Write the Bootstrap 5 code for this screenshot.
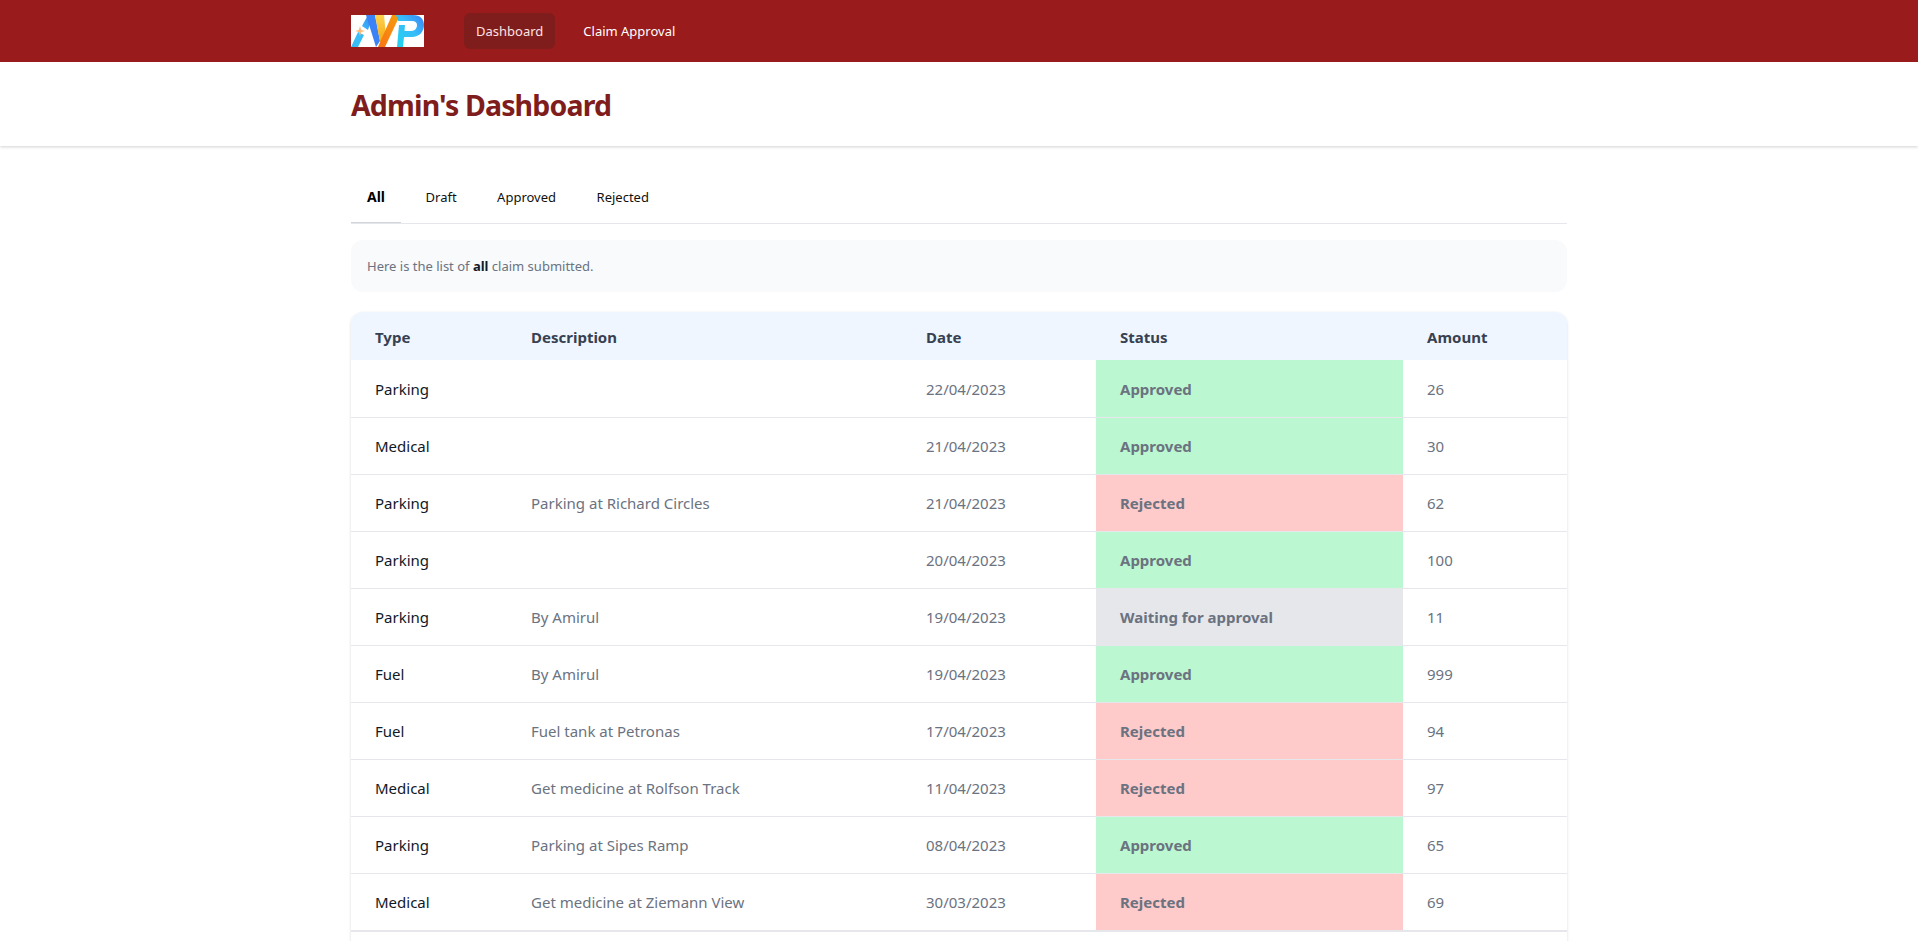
<!DOCTYPE html>
<html lang="en">
<head>
  <meta charset="UTF-8">
  <title>Admin's Dashboard</title>
  <link href="https://cdn.jsdelivr.net/npm/bootstrap@5.3.0/dist/css/bootstrap.min.css" rel="stylesheet">
  <style>
    html, body { height: 100%; overflow: hidden; }
    body { font-family: "Noto Sans", "Open Sans", sans-serif; background: #fff; color: #111827; }
    .page-wrap { width: 1216px; margin: 0 auto; }
    .top-bar { background: #991b1b; height: 62px; padding: 0; }
    .top-bar .nav-link { color: #fff; font-size: 13px; line-height: 20px; padding: 8px 12px; border-radius: 6px; }
    .top-bar .nav-link.active { background: #7f1d1d; color: #fee2e2; }
    .top-bar .nav { gap: 16px; margin-left: 40px; }
    .brand-logo { display: block; width: 73px; height: 32px; }
    .head-strip { height: 84px; padding-top: 2px; box-shadow: 0 1px 3px rgba(0,0,0,.18); display: flex; align-items: center; }
    .head-strip h1 { font-size: 28.5px; font-weight: 700; color: #7f1d1d; margin: 0; letter-spacing: -.85px; }
    .claim-tabs { gap: 8.5px; margin-top: 31px; border-bottom: 1px solid #e5e7eb; height: 47px; }
    .claim-tabs .nav-link { border: 0; padding: 11px 16px 16px; font-size: 13px; line-height: 18px; color: #111; background: none; border-radius: 0; }
    .claim-tabs .nav-link.active { font-size: 14px; font-weight: 700; color: #000; border-bottom: 1px solid #d1d5db; }
    .info-box { background: #f8fafc; border-radius: 12px; height: 52px; margin-top: 16px; padding: 2px 16px 0; display: flex; align-items: center; font-size: 13px; color: #6b7280; }
    .info-box b { color: #111827; }
    .claim-box { margin-top: 20px; border-radius: 12px; box-shadow: 0 1px 3px rgba(0,0,0,.15); overflow: hidden; }
    .claim-table { table-layout: fixed; width: 100%; margin: 0; font-size: 15px; }
    .claim-table th { background: #eff6ff; color: #374151; font-weight: 700; height: 48px; padding: 2px 24px 0; border: 0; vertical-align: middle; }
    .claim-table td { height: 57px; padding: 2px 24px 0; vertical-align: middle; color: #6b7280; border-bottom: 1px solid #e5e7eb; }
    .claim-table td.type-cell { color: #111827; }
    .claim-table td.st-ok, .claim-table td.st-no, .claim-table td.st-wait { font-weight: 700; }
    .claim-table td.st-ok { background: #bbf7d0; }
    .claim-table td.st-no { background: #fecaca; }
    .claim-table td.st-wait { background: #e5e7eb; }
    .foot-strip { height: 40px; border-top: 1px solid #e5e7eb; }
  </style>
</head>
<body>
  <nav class="navbar top-bar">
    <div class="page-wrap d-flex align-items-center">
      <a href="#" class="d-block">
        <svg class="brand-logo" viewBox="0 0 73 32" xmlns="http://www.w3.org/2000/svg">
          <defs>
            <linearGradient id="gA" x1="0" y1="1" x2="1" y2="0"><stop offset="0" stop-color="#38bdf8"/><stop offset="1" stop-color="#3b82f6"/></linearGradient>
            <linearGradient id="gY" x1="0" y1="0" x2="0" y2="1"><stop offset="0" stop-color="#fcd34d"/><stop offset="1" stop-color="#f59e0b"/></linearGradient>
            <linearGradient id="gO" x1="1" y1="0" x2="0" y2="1"><stop offset="0" stop-color="#f59e0b"/><stop offset="1" stop-color="#f97316"/></linearGradient>
            <linearGradient id="gP" x1="0" y1="1" x2="1" y2="0"><stop offset="0" stop-color="#22d3ee"/><stop offset=".55" stop-color="#38bdf8"/><stop offset="1" stop-color="#3b82f6"/></linearGradient>
          </defs>
          <rect width="73" height="32" fill="#fff"/>
          <path d="M0 32 L7 17 L13 20 L7 32Z" fill="#38bdf8"/>
          <path d="M11 11 L17 0 L22 0 L17 15Z" fill="url(#gA)"/>
          <path d="M15 0 L24 0 L29 26 L25 32 Z" fill="#3b82f6"/>
          <path d="M24 0 L33 0 L35 21 L30 32Z" fill="url(#gY)"/>
          <path d="M41 0 L49 0 L34 32 L27 32Z" fill="url(#gO)"/>
          <path fill-rule="evenodd" d="M45 0 H62 C69 0 73 4 73 10 C73 17 68 22 61 22 H53 L52 32 H46 L48 10 H54 L53.5 16 H60 C64 16 66 13 66 10 C66 7.5 64 6 61 6 H47Z" fill="url(#gP)"/>
          <path d="M9 11 L10.2 15 L14 16 L10.2 17 L9 21 L7.8 17 L4 16 L7.8 15Z" fill="#fdba74"/>
        </svg>
      </a>
      <ul class="nav">
        <li class="nav-item"><a class="nav-link active" href="#">Dashboard</a></li>
        <li class="nav-item"><a class="nav-link" href="#">Claim Approval</a></li>
      </ul>
    </div>
  </nav>

  <header class="head-strip">
    <div class="page-wrap"><h1>Admin's Dashboard</h1></div>
  </header>

  <main class="page-wrap">
    <ul class="nav claim-tabs">
      <li class="nav-item"><a class="nav-link active" href="#">All</a></li>
      <li class="nav-item"><a class="nav-link" href="#">Draft</a></li>
      <li class="nav-item"><a class="nav-link" href="#">Approved</a></li>
      <li class="nav-item"><a class="nav-link" href="#">Rejected</a></li>
    </ul>

    <div class="info-box"><span>Here is the list of <b>all</b> claim submitted.</span></div>

    <div class="claim-box">
      <table class="table claim-table">
        <colgroup>
          <col style="width:156px"><col style="width:395px"><col style="width:194px"><col style="width:307px"><col>
        </colgroup>
        <thead>
          <tr><th>Type</th><th>Description</th><th>Date</th><th>Status</th><th>Amount</th></tr>
        </thead>
        <tbody>
          <tr><td class="type-cell">Parking</td><td></td><td>22/04/2023</td><td class="st-ok">Approved</td><td>26</td></tr>
          <tr><td class="type-cell">Medical</td><td></td><td>21/04/2023</td><td class="st-ok">Approved</td><td>30</td></tr>
          <tr><td class="type-cell">Parking</td><td>Parking at Richard Circles</td><td>21/04/2023</td><td class="st-no">Rejected</td><td>62</td></tr>
          <tr><td class="type-cell">Parking</td><td></td><td>20/04/2023</td><td class="st-ok">Approved</td><td>100</td></tr>
          <tr><td class="type-cell">Parking</td><td>By Amirul</td><td>19/04/2023</td><td class="st-wait">Waiting for approval</td><td>11</td></tr>
          <tr><td class="type-cell">Fuel</td><td>By Amirul</td><td>19/04/2023</td><td class="st-ok">Approved</td><td>999</td></tr>
          <tr><td class="type-cell">Fuel</td><td>Fuel tank at Petronas</td><td>17/04/2023</td><td class="st-no">Rejected</td><td>94</td></tr>
          <tr><td class="type-cell">Medical</td><td>Get medicine at Rolfson Track</td><td>11/04/2023</td><td class="st-no">Rejected</td><td>97</td></tr>
          <tr><td class="type-cell">Parking</td><td>Parking at Sipes Ramp</td><td>08/04/2023</td><td class="st-ok">Approved</td><td>65</td></tr>
          <tr><td class="type-cell">Medical</td><td>Get medicine at Ziemann View</td><td>30/03/2023</td><td class="st-no">Rejected</td><td>69</td></tr>
        </tbody>
      </table>
      <div class="foot-strip"></div>
    </div>
  </main>
  <script src="https://cdn.jsdelivr.net/npm/bootstrap@5.3.0/dist/js/bootstrap.bundle.min.js"></script>
</body>
</html>
